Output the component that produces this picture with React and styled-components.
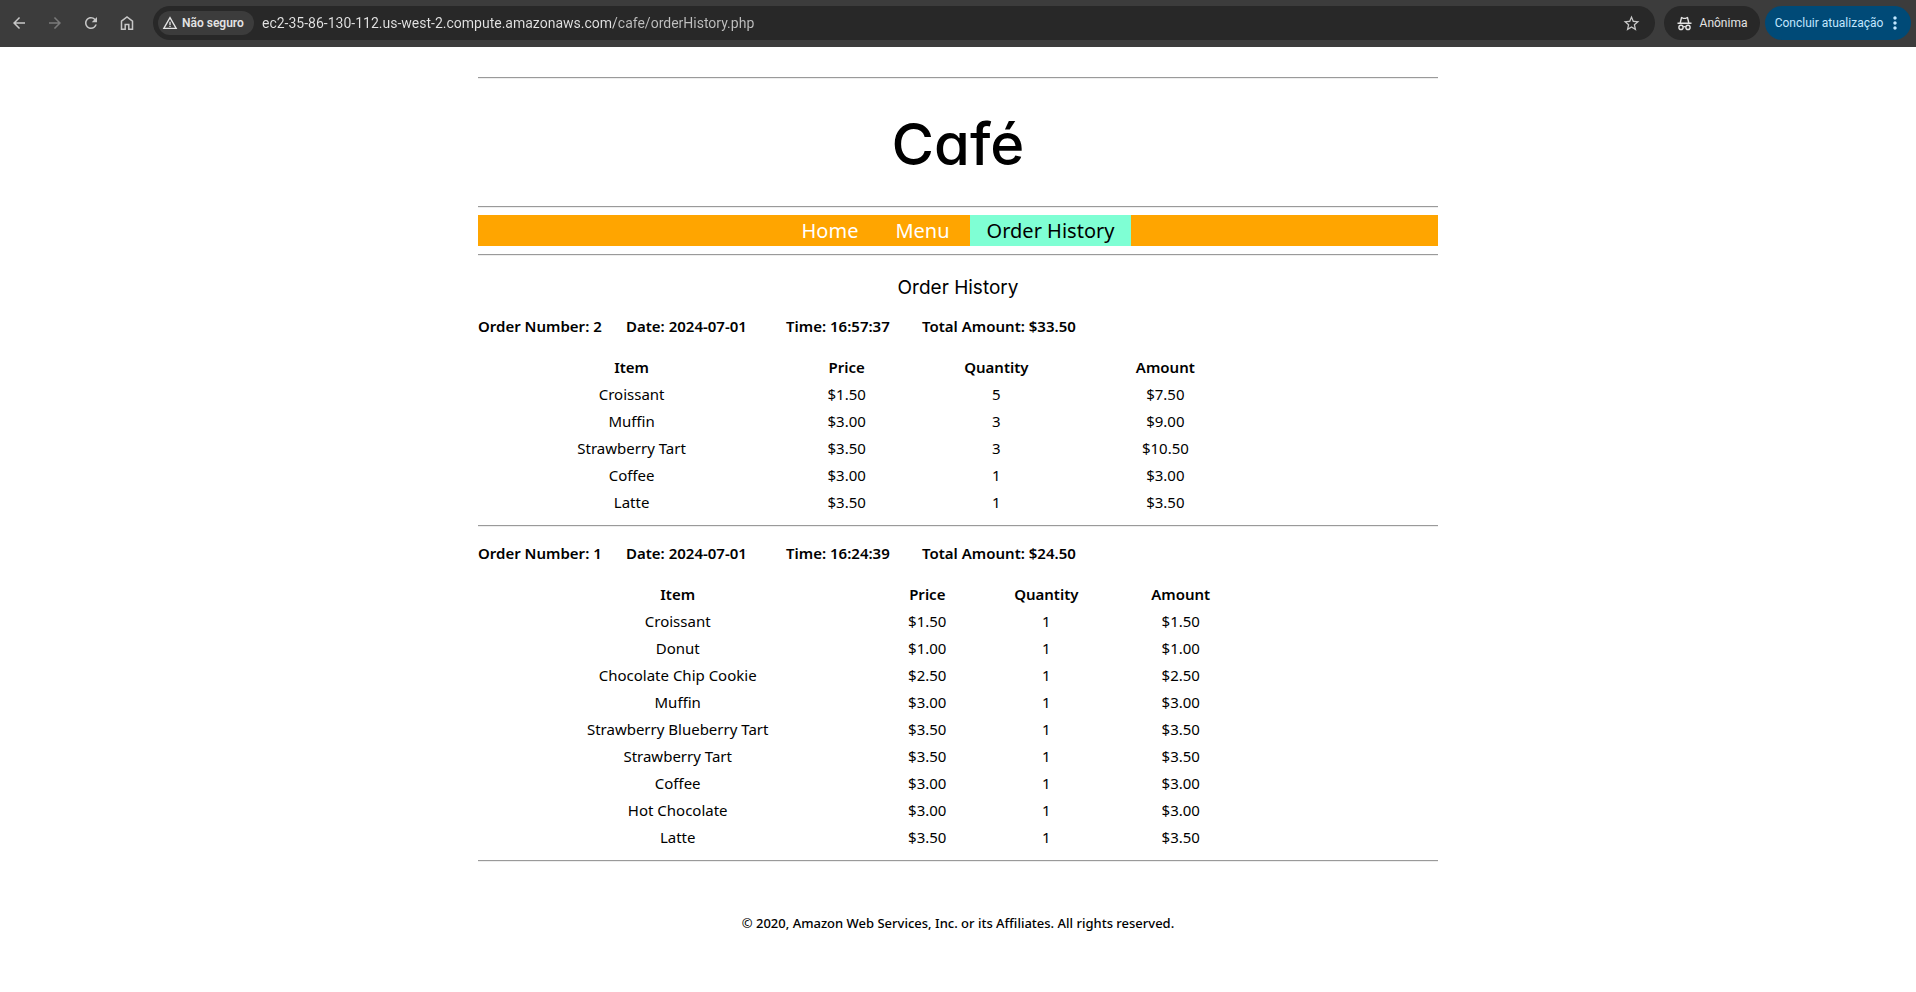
import React from "react";
import styled, { createGlobalStyle } from "styled-components";
import { MdArrowBack, MdArrowForward, MdRefresh, MdWarningAmber, MdStarBorder, MdMoreVert } from "react-icons/md";

const GlobalStyle = createGlobalStyle`
  * { box-sizing: border-box; }
  body {
    margin: 0;
    background: #fff;
    color: #000;
    font-family: "Lucida Sans Unicode", "Noto Sans", sans-serif;
    font-size: 15px;
  }
`;

const uiFont = `"Segoe UI", "Roboto", sans-serif`;
const scriptFont = `"Comic Sans MS", "Inter", sans-serif`;

const BrowserBar = styled.header`
  display: flex;
  align-items: center;
  gap: 9px;
  height: 47px;
  padding: 6px 5px 7px 1px;
  background: #3c3c3c;
  color: #c7c7c7;
  font-family: ${uiFont};
`;

const ToolButtons = styled.div`
  display: flex;
  width: 143px;
`;

const ToolButton = styled.button`
  display: flex;
  flex-shrink: 0;
  align-items: center;
  justify-content: center;
  width: 36px;
  height: 34px;
  padding: 0;
  border: 0;
  background: none;
  color: inherit;
  opacity: ${(p) => (p.disabled ? 0.45 : 1)};
`;

const AddressBar = styled.div`
  flex: 1;
  display: flex;
  align-items: center;
  height: 34px;
  padding: 0 6px 0 5px;
  border-radius: 17px;
  background: #282828;
`;

const SecurityChip = styled.button`
  display: flex;
  align-items: center;
  gap: 4px;
  height: 24px;
  width: 96px;
  padding: 0 4px;
  border: 0;
  border-radius: 12px;
  background: #3c3c3c;
  color: #e3e3e3;
  font: 600 12px ${uiFont};
  white-space: nowrap;
`;

const UrlInput = styled.input`
  flex: 1;
  min-width: 0;
  height: 24px;
  margin: 0 0 0 8px;
  padding: 0;
  border: 0;
  outline: 0;
  font: 14px ${uiFont};
  color: transparent;
  background: linear-gradient(to right, #e3e3e3 353px, #c0c0c0 353px);
  background-clip: text;
`;

const Pill = styled.button`
  display: flex;
  align-items: center;
  justify-content: center;
  gap: ${(p) => (p.$update ? 2 : 8)}px;
  width: ${(p) => (p.$update ? 146 : 96)}px;
  height: 34px;
  margin-left: ${(p) => (p.$update ? -4 : 0)}px;
  padding: ${(p) => (p.$update ? "0 0 0 4px" : "0")};
  border: 0;
  border-radius: 17px;
  background: ${(p) => (p.$update ? "#004a77" : "#282828")};
  color: ${(p) => (p.$update ? "#c2e7ff" : "#e3e3e3")};
  font: 12px ${uiFont};
  white-space: nowrap;
`;

const Page = styled.main`
  max-width: 960px;
  margin: 0 auto;
  padding-top: 30px;
`;

const Rule = styled.hr`
  height: 2px;
  margin: ${(p) => p.$space || "0"};
  border: 0;
  border-top: 1px solid #9a9a9a;
  border-bottom: 1px solid #eee;
`;

const Title = styled.h1`
  margin: 0;
  height: 127px;
  font: 500 58px/130px ${scriptFont};
  font-feature-settings: "cv11";
  text-align: center;
`;

const Nav = styled.nav`
  display: flex;
  justify-content: center;
  gap: 3px;
  background: orange;
`;

const NavLink = styled.a`
  padding: 0 17px;
  font-size: 20px;
  line-height: 31px;
  text-decoration: none;
  background: ${(p) => (p.$active ? "aquamarine" : "transparent")};
  color: ${(p) => (p.$active ? "#000" : "#fff")};
`;

const Heading = styled.h2`
  margin: 17px 0 10px;
  font: 400 19px/30px ${scriptFont};
  text-align: center;
`;

const Summary = styled.p`
  display: grid;
  grid-template-columns: 148px 160px 136px auto;
  margin: 0 0 15px;
  font-weight: 600;
  line-height: 26px;
`;

const OrderTable = styled.table`
  width: 80%;
  table-layout: fixed;
  border-collapse: collapse;
  text-align: center;
`;

const Column = styled.col`
  width: ${(p) => p.$share}%;
`;

const HeadCell = styled.th`
  height: 27px;
  padding: 0;
  font-weight: 600;
  line-height: 27px;
`;

const Cell = styled.td`
  height: 27px;
  padding: 0;
  line-height: 27px;
`;

const Footer = styled.footer`
  margin-top: 49px;
  padding-bottom: 24px;
  font-size: 13px;
  font-weight: 500;
  line-height: 24px;
  text-align: center;
`;

const HomeIcon = () => (
  <svg width="16" height="16" viewBox="0 0 16 16" fill="none" stroke="currentColor" strokeWidth="1.5">
    <path d="M2.500 6.200 8 1.900l5.500 4.300V14.200H9.800V9.500H6.200v4.700H2.500z" />
  </svg>
);

const IncognitoIcon = () => (
  <svg width="15" height="15" viewBox="0 0 15 15" fill="none" stroke="currentColor" strokeWidth="1.4">
    <path d="M0.500 7.300h14M3.200 7 4.500 1.700l1.500.5q1.500.4 3 0l1.500-.5L11.800 7" />
    <circle cx="4" cy="11.400" r="2.100" />
    <circle cx="11" cy="11.400" r="2.100" />
    <path d="M6.100 11q1.400-.8 2.800 0" />
  </svg>
);

const orders = [
  {
    number: 2,
    date: "2024-07-01",
    time: "16:57:37",
    total: "$33.50",
    columns: [40, 16, 23, 21],
    items: [
      ["Croissant", "$1.50", 5, "$7.50"],
      ["Muffin", "$3.00", 3, "$9.00"],
      ["Strawberry Tart", "$3.50", 3, "$10.50"],
      ["Coffee", "$3.00", 1, "$3.00"],
      ["Latte", "$3.50", 1, "$3.50"],
    ],
  },
  {
    number: 1,
    date: "2024-07-01",
    time: "16:24:39",
    total: "$24.50",
    columns: [52, 13, 18, 17],
    items: [
      ["Croissant", "$1.50", 1, "$1.50"],
      ["Donut", "$1.00", 1, "$1.00"],
      ["Chocolate Chip Cookie", "$2.50", 1, "$2.50"],
      ["Muffin", "$3.00", 1, "$3.00"],
      ["Strawberry Blueberry Tart", "$3.50", 1, "$3.50"],
      ["Strawberry Tart", "$3.50", 1, "$3.50"],
      ["Coffee", "$3.00", 1, "$3.00"],
      ["Hot Chocolate", "$3.00", 1, "$3.00"],
      ["Latte", "$3.50", 1, "$3.50"],
    ],
  },
];

const Order = ({ order }) => (
  <section>
    <Summary>
      <span>Order Number: {order.number}</span>
      <span>Date: {order.date}</span>
      <span>Time: {order.time}</span>
      <span>Total Amount: {order.total}</span>
    </Summary>
    <OrderTable>
      <colgroup>
        {order.columns.map((share, i) => <Column key={i} $share={share} />)}
      </colgroup>
      <thead>
        <tr>
          {["Item", "Price", "Quantity", "Amount"].map((h) => <HeadCell key={h} scope="col">{h}</HeadCell>)}
        </tr>
      </thead>
      <tbody>
        {order.items.map((row) => (
          <tr key={row[0]}>
            {row.map((value, i) => <Cell key={i}>{value}</Cell>)}
          </tr>
        ))}
      </tbody>
    </OrderTable>
    <Rule $space="9px 0 13px" />
  </section>
);

export default function App() {
  return (
    <>
      <GlobalStyle />
      <BrowserBar>
        <ToolButtons>
          <ToolButton aria-label="Voltar"><MdArrowBack size={18} /></ToolButton>
          <ToolButton aria-label="Avançar" disabled><MdArrowForward size={18} /></ToolButton>
          <ToolButton aria-label="Recarregar"><MdRefresh size={18} /></ToolButton>
          <ToolButton aria-label="Página inicial"><HomeIcon /></ToolButton>
        </ToolButtons>
        <AddressBar>
          <SecurityChip><MdWarningAmber size={16} />Não seguro</SecurityChip>
          <UrlInput
            aria-label="Endereço"
            defaultValue="ec2-35-86-130-112.us-west-2.compute.amazonaws.com/cafe/orderHistory.php"
          />
          <ToolButton aria-label="Favoritar"><MdStarBorder size={19} /></ToolButton>
        </AddressBar>
        <Pill><IncognitoIcon />Anônima</Pill>
        <Pill $update>Concluir atualização<MdMoreVert size={20} /></Pill>
      </BrowserBar>
      <Page>
        <Rule />
        <Title>Café</Title>
        <Rule $space="0 0 7px" />
        <Nav>
          <NavLink href="#home">Home</NavLink>
          <NavLink href="#menu">Menu</NavLink>
          <NavLink href="#history" $active aria-current="page">Order History</NavLink>
        </Nav>
        <Rule $space="8px 0 0" />
        <Heading>Order History</Heading>
        {orders.map((order) => <Order key={order.number} order={order} />)}
        <Footer>© 2020, Amazon Web Services, Inc. or its Affiliates. All rights reserved.</Footer>
      </Page>
    </>
  );
}
